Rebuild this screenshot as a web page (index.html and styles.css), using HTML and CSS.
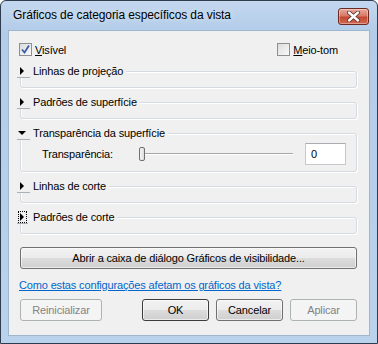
FILE: index.html
```html
<!DOCTYPE html>
<html lang="pt">
<head>
<meta charset="UTF-8">
<title>Gráficos de categoria específicos da vista</title>
<link rel="stylesheet" href="styles.css">
</head>
<body>
<div class="window">
    <div class="titlebar">
        <span class="title">Gráficos de categoria específicos da vista</span>
        <span class="close">
            <svg width="15" height="11" viewBox="0 0 15 11">
                <path d="M3,1.5 L12,9.5 M12,1.5 L3,9.5" stroke="#5a2a22" stroke-width="4" stroke-linecap="round"/>
                <path d="M3,1.5 L12,9.5 M12,1.5 L3,9.5" stroke="#fff" stroke-width="2.4" stroke-linecap="round"/>
            </svg>
        </span>
    </div>

    <div class="client">
        <div class="checks">
            <label class="check">
                <span class="box">
                    <svg width="11" height="11" viewBox="0 0 11 11"><path d="M2,5.5 L4.5,8.5 L9,1.5" fill="none" stroke="#3a5ea8" stroke-width="1.8"/></svg>
                </span>
                <span><u>V</u>isível</span>
            </label>
            <label class="check">
                <span class="box"></span>
                <span><u>M</u>eio-tom</span>
            </label>
        </div>

        <!-- collapsed groups -->
        <div class="group">
            <div class="group-head">
                <span class="toggle"><span class="arrow-right"></span></span>
                <span class="group-title">Linhas de projeção</span>
            </div>
        </div>

        <div class="group">
            <div class="group-head">
                <span class="toggle"><span class="arrow-right"></span></span>
                <span class="group-title">Padrões de superfície</span>
            </div>
        </div>

        <div class="group open">
            <div class="group-head">
                <span class="toggle"><span class="arrow-down"></span></span>
                <span class="group-title">Transparência da superfície</span>
            </div>
            <div class="group-body">
                <span class="field-label">Transparência:</span>
                <div class="slider">
                    <span class="thumb"></span>
                    <span class="track"></span>
                </div>
                <span class="num">0</span>
            </div>
        </div>

        <div class="group">
            <div class="group-head">
                <span class="toggle"><span class="arrow-right"></span></span>
                <span class="group-title">Linhas de corte</span>
            </div>
        </div>

        <div class="group">
            <div class="group-head">
                <span class="toggle focus"><span class="arrow-right"></span></span>
                <span class="group-title">Padrões de corte</span>
            </div>
        </div>

        <button class="btn wide">Abrir a caixa de diálogo Gráficos de visibilidade...</button>

        <a class="help" href="#">Como estas configurações afetam os gráficos da vista?</a>

        <div class="actions">
            <button class="btn reset" disabled>Reinicializar</button>
            <span class="spacer"></span>
            <button class="btn default">OK</button>
            <button class="btn">Cancelar</button>
            <button class="btn" disabled>Aplicar</button>
        </div>
    </div>
</div>
</body>
</html>
```

FILE: styles.css
```css
body {
    margin: 0;
    background: #fff;
    font-family: 'Liberation Sans', Arial, sans-serif;
    font-size: 11px;
    letter-spacing: -0.15px;
    color: #000;
}
.window {
    width: 378px;
    height: 344px;
    box-sizing: border-box;
    border: 1px solid #2f3c4d;
    border-radius: 6px 6px 0 0;
    background: linear-gradient(#c3d8ef, #b3cce8 30px, #bad2ec);
    display: flex;
    flex-direction: column;
}
.titlebar {
    height: 29px;
    display: flex;
    align-items: center;
    padding: 0 8px 2px 11px;
    box-sizing: border-box;
}
.title {
    flex: 1;
    font-size: 12px;
    letter-spacing: -0.1px;
    padding-left: 1px;
    color: #000;
    text-shadow: 0 0 6px rgba(255,255,255,0.7);
}
.close {
    width: 31px;
    height: 17px;
    box-sizing: border-box;
    margin-top: 3px;
    border: 1px solid #6e2a20;
    border-radius: 3px;
    background: linear-gradient(#e9a99c, #d77a67 45%, #c24a33 55%, #d3684f);
    display: flex;
    align-items: center;
    justify-content: center;
    box-shadow: inset 0 0 0 1px rgba(255,255,255,0.35);
}
.client {
    flex: 1;
    margin: 0 7px 7px;
    background: #f0f0f0;
    border: 1px solid #9fb6cf;
    padding: 12px 12px 0 11px;
    display: flex;
    flex-direction: column;
}
.checks {
    display: flex;
    justify-content: space-between;
    height: 13px;
    padding-right: 19px;
}
.check {
    display: flex;
    align-items: center;
    gap: 3px;
    margin-left: -1px;
}
.box {
    width: 13px;
    height: 13px;
    box-sizing: border-box;
    border: 1px solid #8e8f8f;
    background: linear-gradient(135deg, #dcdcdc, #fafafa);
    display: flex;
    align-items: center;
    justify-content: center;
}
.group {
    margin-top: 14px;
    height: 17px;
    box-sizing: border-box;
    border: 1px solid #d5dbe1;
    border-radius: 3px;
    box-shadow: inset 1px 1px 0 #fff, 1px 1px 0 #fff;
}
.checks + .group {
    margin-top: 15px;
}
.group.open {
    height: 39px;
}
.group-head {
    display: flex;
    align-items: center;
    height: 14px;
    margin: -8px 0 0 -4px;
}
.toggle {
    width: 13px;
    height: 14px;
    box-sizing: border-box;
    background: #f0f0f0;
    border-bottom: 1px solid #a9b0b6;
    display: flex;
    align-items: center;
    padding-left: 3px;
}
.toggle.focus {
    outline: 1px dotted #000;
    outline-offset: -2px;
    width: 11px;
    margin-right: 2px;
}
.arrow-right {
    width: 0;
    height: 0;
    border-top: 4px solid transparent;
    border-bottom: 4px solid transparent;
    border-left: 4px solid #000;
}
.arrow-down {
    width: 0;
    height: 0;
    margin-top: 1px;
    border-left: 4px solid transparent;
    border-right: 4px solid transparent;
    border-top: 4px solid #000;
    margin-left: -2px;
}
.group-title {
    background: #f0f0f0;
    padding: 0 3px;
    line-height: 14px;
}
.group-body {
    display: flex;
    align-items: center;
    margin-top: 3px;
    padding-left: 21px;
    height: 22px;
}
.field-label {
    flex: 0 0 97px;
}
.slider {
    display: flex;
    align-items: center;
    width: 154px;
}
.thumb {
    width: 6px;
    height: 14px;
    box-sizing: border-box;
    border: 1px solid #6f6f6f;
    border-radius: 2px;
    background: linear-gradient(90deg, #f6f6f6, #dcdcdc);
}
.track {
    flex: 1;
    height: 1px;
    background: #a7a7a7;
    border-bottom: 1px solid #fff;
}
.num {
    margin-left: 12px;
    width: 41px;
    height: 22px;
    box-sizing: border-box;
    border: 1px solid #c5c9ce;
    border-top-color: #abadb3;
    background: #fff;
    padding-left: 5px;
    line-height: 20px;
}
.btn {
    font-family: inherit;
    font-size: 11px;
    letter-spacing: -0.15px;
    color: #000;
    height: 22px;
    border: 1px solid #707070;
    border-radius: 3px;
    background: linear-gradient(#f2f2f2, #ebebeb 50%, #dddddd 50%, #cfcfcf);
    box-shadow: inset 0 0 0 1px rgba(255,255,255,0.6);
    padding: 0;
}
.btn:disabled {
    border-color: #adb2b5;
    background: #f4f4f4;
    color: #838383;
    box-shadow: none;
}
.btn.default {
    border-color: #3c3c3c;
}
.wide {
    margin-top: 13px;
    width: 100%;
}
.help {
    margin-top: 10px;
    margin-left: -1px;
    color: #0066cc;
    line-height: 13px;
}
.actions {
    display: flex;
    gap: 7px;
    margin-top: 7px;
}
.actions .btn {
    width: 67px;
}
.actions .reset {
    width: 82px;
}
.spacer {
    flex: 1;
}
```
